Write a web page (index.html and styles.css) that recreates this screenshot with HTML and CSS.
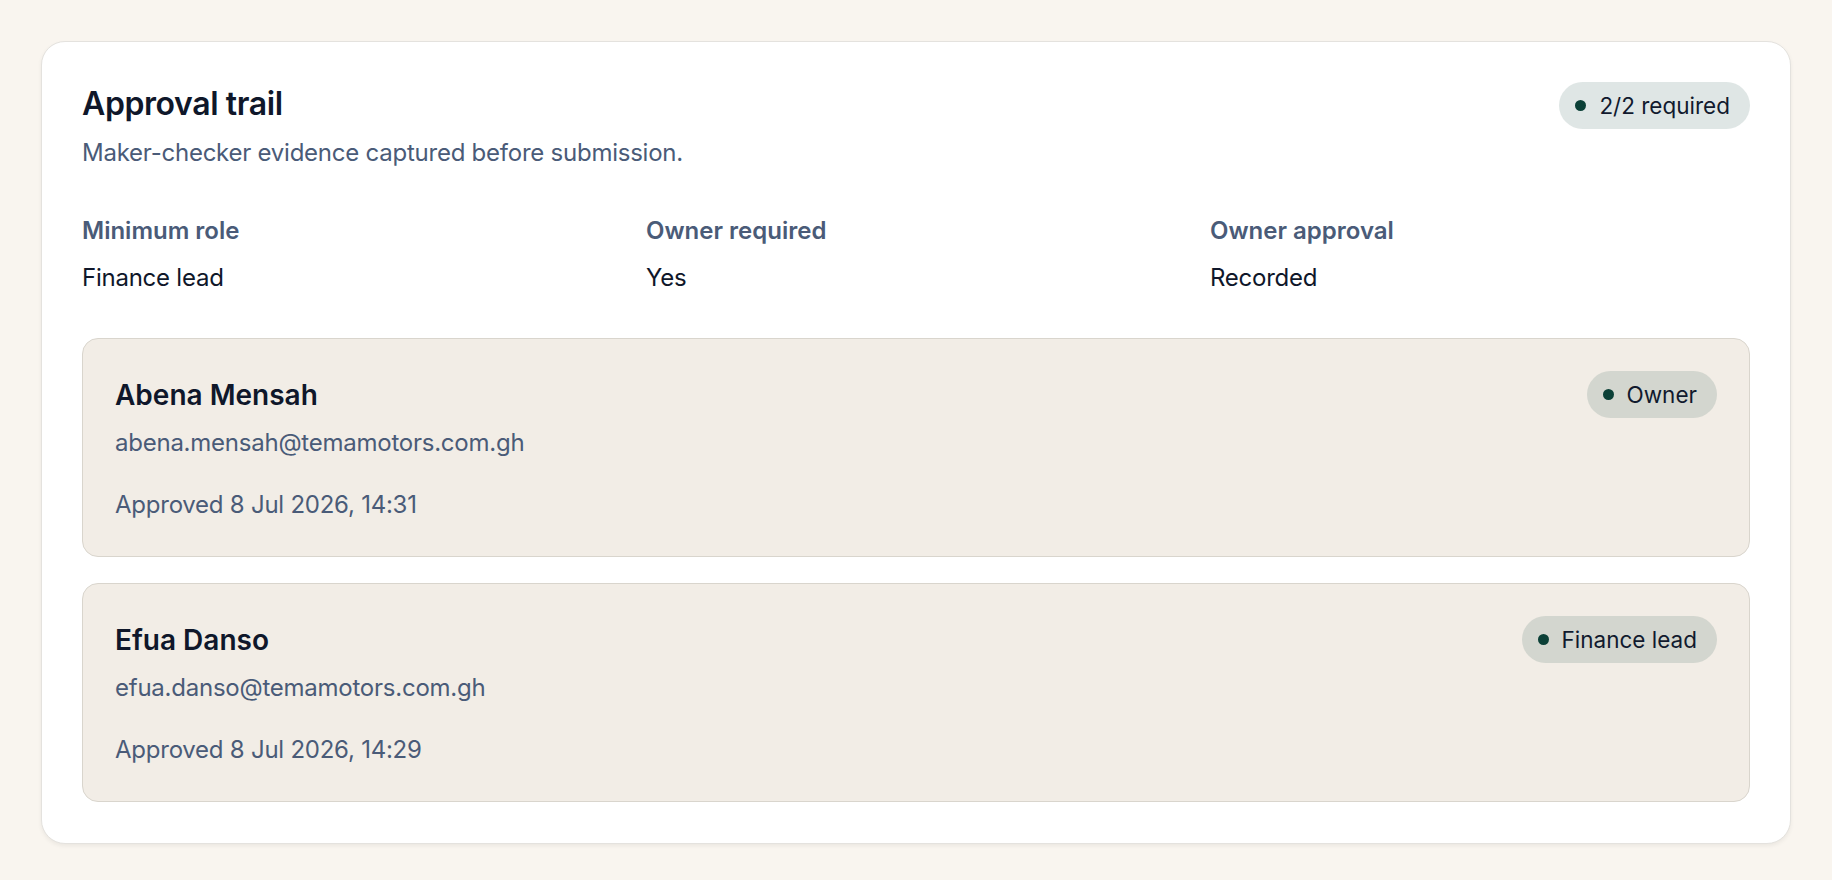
FILE: index.html
```html
<!DOCTYPE html>
<html lang="en">
<head>
    <meta charset="UTF-8">
    <meta name="viewport" content="width=device-width, initial-scale=1.0">
    <title>Approval trail</title>
    <link rel="stylesheet" href="styles.css">
</head>
<body>
    <section class="panel">
        <div class="panel-head">
            <div>
                <h2 class="panel-title">Approval trail</h2>
                <p class="panel-sub">Maker-checker evidence captured before submission.</p>
            </div>
            <span class="pill"><span class="dot"></span>2/2 required</span>
        </div>

        <div class="meta">
            <div>
                <p class="meta-label">Minimum role</p>
                <p class="meta-value">Finance lead</p>
            </div>
            <div>
                <p class="meta-label">Owner required</p>
                <p class="meta-value">Yes</p>
            </div>
            <div>
                <p class="meta-label">Owner approval</p>
                <p class="meta-value">Recorded</p>
            </div>
        </div>

        <div class="approvals">
            <div class="approval">
                <div class="approval-top">
                    <p class="approval-name">Abena Mensah</p>
                    <span class="pill"><span class="dot"></span>Owner</span>
                </div>
                <p class="approval-mail">abena.mensah@temamotors.com.gh</p>
                <p class="approval-time">Approved 8 Jul 2026, 14:31</p>
            </div>
            <div class="approval">
                <div class="approval-top">
                    <p class="approval-name">Efua Danso</p>
                    <span class="pill"><span class="dot"></span>Finance lead</span>
                </div>
                <p class="approval-mail">efua.danso@temamotors.com.gh</p>
                <p class="approval-time">Approved 8 Jul 2026, 14:29</p>
            </div>
        </div>
    </section>
</body>
</html>
```

FILE: styles.css
```css
body {
    margin: 0;
    padding: 41px;
    background-color: #f9f5ef;
    font-family: Inter, "Noto Sans", sans-serif;
    color: #0f172a;
}

p {
    margin: 0;
}

.panel {
    background-color: white;
    border: 1px solid #e4e2de;
    border-radius: 24px;
    box-shadow: 0 2px 4px rgba(0, 0, 0, 0.06);
    padding: 40px 40px 41px;
}

.panel-head {
    display: flex;
    justify-content: space-between;
    align-items: flex-start;
}

.panel-title {
    margin: 0;
    font-size: 32px;
    font-weight: 600;
    line-height: 44px;
    letter-spacing: -0.4px;
}

.panel-sub {
    margin-top: 9px;
    font-size: 24px;
    line-height: 36px;
    letter-spacing: -0.24px;
    color: #4a5b78;
}

.pill {
    display: inline-flex;
    align-items: center;
    gap: 13px;
    height: 47px;
    padding: 0 20px 0 16px;
    border-radius: 24px;
    background-color: rgba(11, 64, 55, 0.13);
    font-size: 22.5px;
    color: #111a2e;
    white-space: nowrap;
    box-sizing: border-box;
}

.dot {
    width: 11px;
    height: 11px;
    border-radius: 50%;
    background-color: #0b4037;
}

.meta {
    display: grid;
    grid-template-columns: repeat(3, 1fr);
    gap: 24px;
    margin-top: 42px;
}

.meta-label {
    font-size: 24px;
    line-height: 36px;
    font-weight: 600;
    color: #4a5b78;
}

.meta-value {
    margin-top: 11px;
    font-size: 24px;
    line-height: 36px;
    letter-spacing: -0.24px;
}

.approvals {
    display: flex;
    flex-direction: column;
    gap: 26px;
    margin-top: 42px;
}

.approval {
    background-color: #f2ede6;
    border: 1px solid #d9d5cd;
    border-radius: 16px;
    padding: 32px 32px 33px;
}

.approval-top {
    display: flex;
    justify-content: space-between;
    align-items: center;
}

.approval-name {
    font-size: 28px;
    font-weight: 600;
}

.approval-mail {
    margin-top: 7px;
    font-size: 24px;
    line-height: 36px;
    letter-spacing: -0.24px;
    color: #4a5b78;
}

.approval-time {
    margin-top: 26px;
    font-size: 24px;
    line-height: 36px;
    letter-spacing: -0.24px;
    color: #4a5b78;
}
```
